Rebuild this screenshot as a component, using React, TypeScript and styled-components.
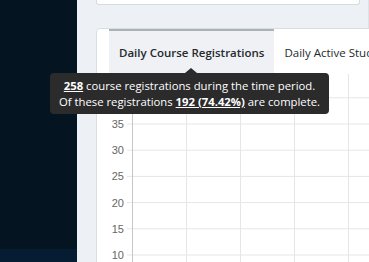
import { createGlobalStyle } from "styled-components";
import styled from "styled-components";

const GlobalStyle = createGlobalStyle`
  html, body {
    margin: 0;
    padding: 0;
    overflow: hidden;
  }
  body {
    font-family: "Open Sans", "Liberation Sans", sans-serif;
  }
`;

// y axis ticks of the registrations chart
const yTicks = [40, 35, 30, 25, 20, 15, 10];
const tickY = (v: number) => 50 + ((35 - v) / 5) * 26.2;
const xLines = [89.5, 143.5, 197.5, 251.5];

function App() {
  return (
    <>
      <GlobalStyle />
      <Page>
        <Sidebar>
          <SidebarFill />
          <SidebarFooter />
        </Sidebar>

        <Main>
          <TopCard />

          <ChartCard>
            <Tabs>
              <Tab $active>Daily Course Registrations</Tab>
              <Tab>Daily Active Students</Tab>
            </Tabs>

            <ChartBody>
              <svg width="272" height="200" viewBox="0 0 272 200">
                {yTicks.map((v) => (
                  <g key={`tick_${v}`}>
                    <line
                      x1="30"
                      x2="272"
                      y1={tickY(v)}
                      y2={tickY(v)}
                      stroke="#e6e6e6"
                      strokeWidth="1"
                    />
                    <text
                      x="27"
                      y={tickY(v) + 4}
                      textAnchor="end"
                      fontSize="11"
                      fill="#666"
                      fontFamily="'Liberation Sans', Arial, sans-serif"
                    >
                      {v}
                    </text>
                  </g>
                ))}
                {xLines.map((x) => (
                  <line
                    key={`x_${x}`}
                    x1={x}
                    x2={x}
                    y1="0"
                    y2="200"
                    stroke="#e6e6e6"
                    strokeWidth="1"
                  />
                ))}
                <line x1="35.5" x2="35.5" y1="0" y2="200" stroke="#c6c6c6" />
              </svg>

              <Tooltip>
                <div>
                  <Strong>258</Strong> course registrations during the time
                  period.
                </div>
                <div>
                  Of these registrations <Strong>192 (74.42%)</Strong> are
                  complete.
                </div>
              </Tooltip>
            </ChartBody>
          </ChartCard>
        </Main>
      </Page>
    </>
  );
}

export default App;

// Style
const Page = styled.div`
  width: 369px;
  height: 262px;
  display: flex;
  overflow: hidden;
`;

const Sidebar = styled.div`
  width: 77px;
  flex-shrink: 0;
  display: flex;
  flex-direction: column;
  background-color: #041521;
`;

const SidebarFill = styled.div`
  flex: 1;
`;

const SidebarFooter = styled.div`
  height: 13px;
  background-color: #061c33;
`;

const Main = styled.div`
  flex: 1;
  min-width: 0;
  background-color: #edf1f5;
  padding-left: 19px;
  display: flex;
  flex-direction: column;
  align-items: flex-start;
  gap: 23px;
  border-right: 1px solid #dde2e7;
  box-sizing: border-box;
`;

const TopCard = styled.div`
  flex-shrink: 0;
  height: 4px;
  width: 262px;
  background-color: #fff;
  border: 1px solid #d6dbe0;
  border-top: none;
  border-radius: 0 0 3px 3px;
`;

const ChartCard = styled.div`
  flex-shrink: 0;
  width: 300px;
  background-color: #fff;
  border: 1px solid #d9dee3;
  border-radius: 4px 0 0 0;
  display: flex;
  flex-direction: column;
`;

const Tabs = styled.div`
  display: flex;
  padding-left: 12px;
  height: 45px;
  flex-shrink: 0;
`;

const Tab = styled.div<{ $active?: boolean }>`
  display: flex;
  align-items: center;
  padding: 0 10px;
  font-size: 11.5px;
  font-weight: ${(p) => (p.$active ? 600 : 400)};
  color: #25292d;
  white-space: nowrap;
  box-sizing: border-box;
  border-top: 2px solid ${(p) => (p.$active ? "#a9b1b9" : "transparent")};
  background-color: ${(p) => (p.$active ? "#eff1f4" : "transparent")};
`;

const ChartBody = styled.div`
  position: relative;
  height: 200px;

  svg {
    display: block;
  }
`;

const Tooltip = styled.div`
  position: absolute;
  left: -47px;
  top: -1px;
  width: 279px;
  height: 41px;
  box-sizing: border-box;
  background-color: #2b2b2b;
  border-radius: 4px;
  color: #fff;
  font-size: 11.3px;
  line-height: 16px;
  text-align: center;
  padding-top: 5px;
  white-space: nowrap;

  &::before {
    content: "";
    position: absolute;
    left: 135px;
    top: -5px;
    border-left: 6px solid transparent;
    border-right: 6px solid transparent;
    border-bottom: 5px solid #2b2b2b;
  }
`;

const Strong = styled.span`
  font-weight: 700;
  text-decoration: underline;
`;
